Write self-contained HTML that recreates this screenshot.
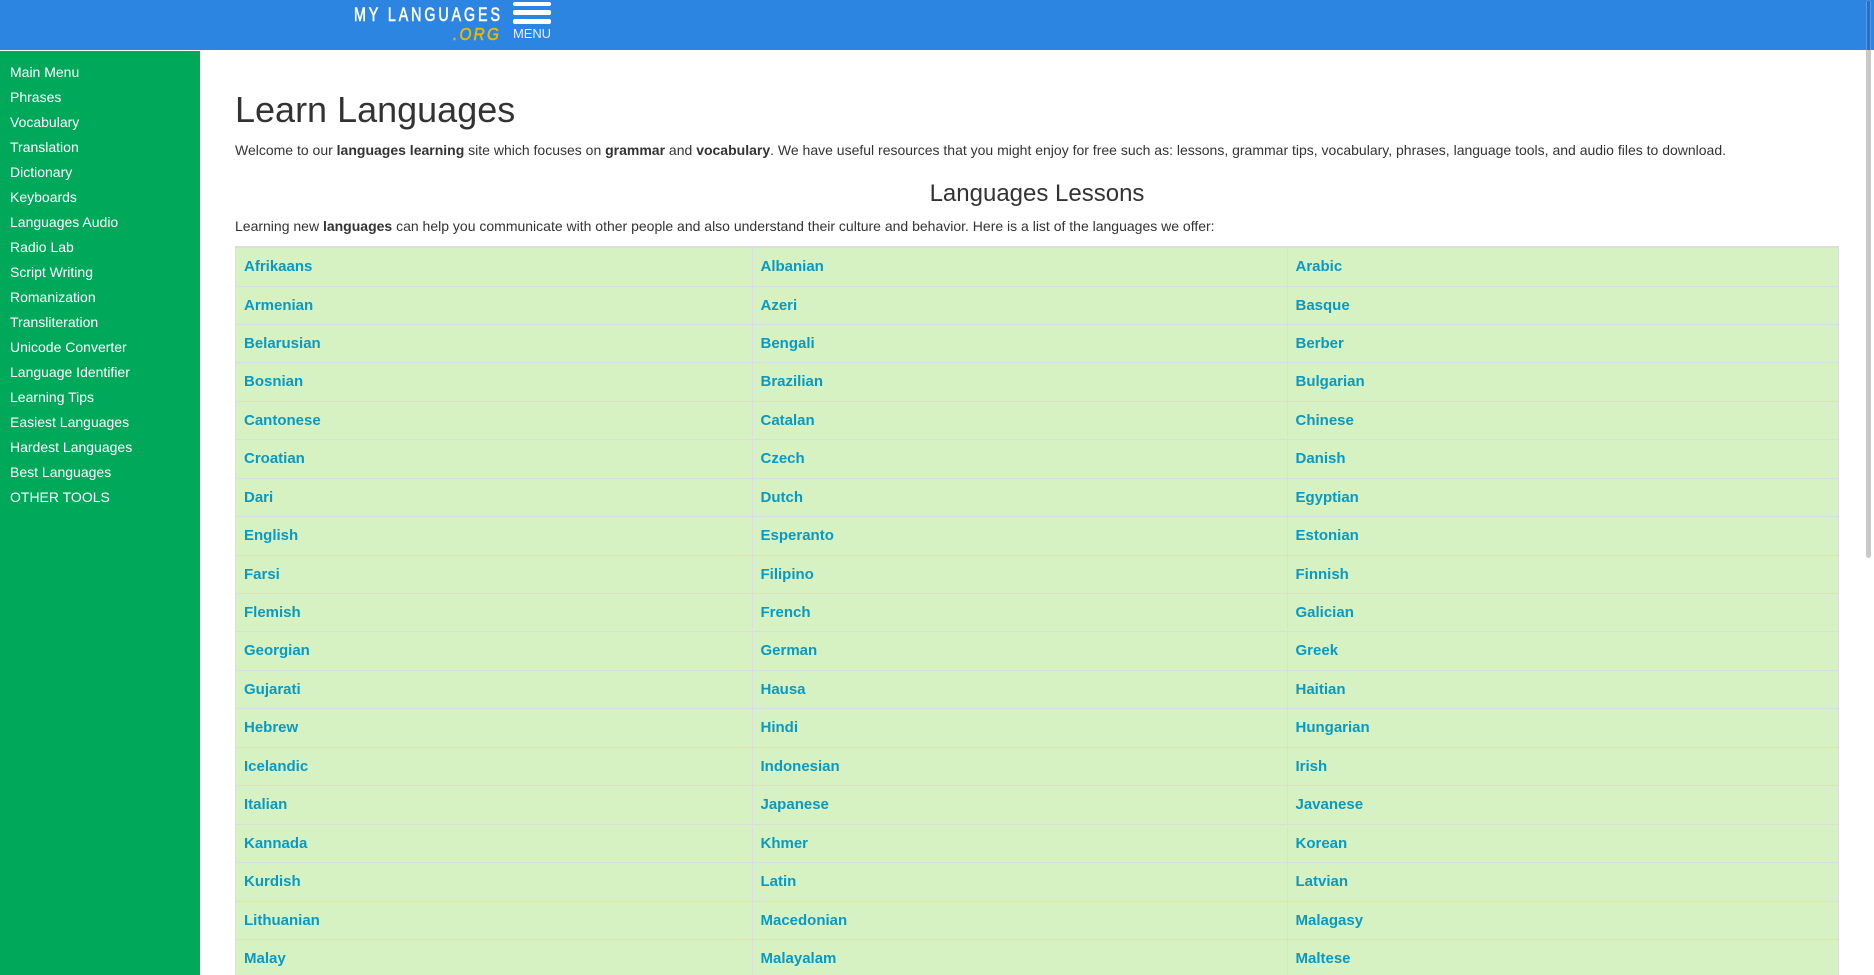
<!DOCTYPE html>
<html lang="en">
<head>
<meta charset="utf-8">
<title>Learn Languages</title>
<style>
html,body{margin:0;padding:0;width:1874px;height:975px;overflow:hidden;background:#fff}
body{font-family:"Liberation Sans",Arial,sans-serif;font-size:14px;line-height:20px;color:#333;position:relative}
a{text-decoration:none}
#hdr{position:absolute;left:0;top:0;width:1874px;height:50px;background:#2d85e2}
#hdr svg{position:absolute;left:0;top:0}
#side{position:absolute;left:0;top:51px;width:200px;height:924px;background:#00a859}
#side a{position:absolute;left:10px;color:#fff;font-size:14px;line-height:20px;white-space:nowrap}
h1{position:absolute;left:235px;top:89px;margin:0;font-size:36px;line-height:42px;font-weight:400;color:#333;white-space:nowrap}
h2{position:absolute;left:235px;width:1604px;top:180px;margin:0;font-size:24px;line-height:27px;font-weight:400;text-align:center;color:#333}
p{position:absolute;left:235px;margin:0;white-space:nowrap}
table{position:absolute;left:235px;top:246px;width:1603px;table-layout:fixed;border-collapse:collapse;background:#d7f2c2;font-size:15px;line-height:21.43px;border:1px solid #ddd;border-top:2px solid #ddd}
td{border:1px solid #ddd;padding:8px;font-weight:700}
tr:first-child td{padding-top:8.1px}
td a{color:#0a99c2}
#sb{position:absolute;left:1866px;top:0;width:5px;height:558px;background:#c8c8c8;border-radius:3px}
#sbt{position:absolute;left:1866px;top:0;width:5px;height:50px;background:#2470c4;border-radius:3px 3px 0 0;box-shadow:inset 1px 0 0 #5a9be6,inset -1px 0 0 #5a9be6}
</style>
</head>
<body>
<div id="hdr">
<svg width="1874" height="50" xmlns="http://www.w3.org/2000/svg">
<text transform="translate(354 21) scale(.75 1)" font-family="'Liberation Sans',sans-serif" font-size="19" fill="#fff" stroke="#fff" stroke-width=".6" textLength="194.6" lengthAdjust="spacing">MY LANGUAGES</text>
<text transform="translate(453 40) scale(.85 1)" font-family="'Liberation Sans',sans-serif" font-size="18" font-style="italic" fill="#f4b400" stroke="#f4b400" stroke-width=".6" textLength="54" lengthAdjust="spacing">.ORG</text>
<rect x="513" y="2" width="38" height="4" rx="2" fill="#fff"/>
<rect x="513" y="10" width="38" height="5" rx="2" fill="#fff"/>
<rect x="513" y="19" width="38" height="5" rx="2" fill="#fff"/>
<text x="513" y="38" font-family="'Liberation Sans',sans-serif" font-size="13" fill="#e4efff" textLength="38">MENU</text>
</svg>
</div>
<div id="side">
<a style="top:11px">Main Menu</a>
<a style="top:36px">Phrases</a>
<a style="top:61px">Vocabulary</a>
<a style="top:86px">Translation</a>
<a style="top:111px">Dictionary</a>
<a style="top:136px">Keyboards</a>
<a style="top:161px">Languages Audio</a>
<a style="top:186px">Radio Lab</a>
<a style="top:211px">Script Writing</a>
<a style="top:236px">Romanization</a>
<a style="top:261px">Transliteration</a>
<a style="top:286px">Unicode Converter</a>
<a style="top:311px">Language Identifier</a>
<a style="top:336px">Learning Tips</a>
<a style="top:361px">Easiest Languages</a>
<a style="top:386px">Hardest Languages</a>
<a style="top:411px">Best Languages</a>
<a style="top:436px">OTHER TOOLS</a>
</div>
<h1>Learn Languages</h1>
<p style="top:140px">Welcome to our <b>languages learning</b> site which focuses on <b>grammar</b> and <b>vocabulary</b>. We have useful resources that you might enjoy for free such as: lessons, grammar tips, vocabulary, phrases, language tools, and audio files to download.</p>
<h2>Languages Lessons</h2>
<p style="top:216px">Learning new <b>languages</b> can help you communicate with other people and also understand their culture and behavior. Here is a list of the languages we offer:</p>
<table>
<colgroup><col style="width:516.5px"><col style="width:535px"><col style="width:551.5px"></colgroup>
<tr><td><a>Afrikaans</a></td><td><a>Albanian</a></td><td><a>Arabic</a></td></tr>
<tr><td><a>Armenian</a></td><td><a>Azeri</a></td><td><a>Basque</a></td></tr>
<tr><td><a>Belarusian</a></td><td><a>Bengali</a></td><td><a>Berber</a></td></tr>
<tr><td><a>Bosnian</a></td><td><a>Brazilian</a></td><td><a>Bulgarian</a></td></tr>
<tr><td><a>Cantonese</a></td><td><a>Catalan</a></td><td><a>Chinese</a></td></tr>
<tr><td><a>Croatian</a></td><td><a>Czech</a></td><td><a>Danish</a></td></tr>
<tr><td><a>Dari</a></td><td><a>Dutch</a></td><td><a>Egyptian</a></td></tr>
<tr><td><a>English</a></td><td><a>Esperanto</a></td><td><a>Estonian</a></td></tr>
<tr><td><a>Farsi</a></td><td><a>Filipino</a></td><td><a>Finnish</a></td></tr>
<tr><td><a>Flemish</a></td><td><a>French</a></td><td><a>Galician</a></td></tr>
<tr><td><a>Georgian</a></td><td><a>German</a></td><td><a>Greek</a></td></tr>
<tr><td><a>Gujarati</a></td><td><a>Hausa</a></td><td><a>Haitian</a></td></tr>
<tr><td><a>Hebrew</a></td><td><a>Hindi</a></td><td><a>Hungarian</a></td></tr>
<tr><td><a>Icelandic</a></td><td><a>Indonesian</a></td><td><a>Irish</a></td></tr>
<tr><td><a>Italian</a></td><td><a>Japanese</a></td><td><a>Javanese</a></td></tr>
<tr><td><a>Kannada</a></td><td><a>Khmer</a></td><td><a>Korean</a></td></tr>
<tr><td><a>Kurdish</a></td><td><a>Latin</a></td><td><a>Latvian</a></td></tr>
<tr><td><a>Lithuanian</a></td><td><a>Macedonian</a></td><td><a>Malagasy</a></td></tr>
<tr><td><a>Malay</a></td><td><a>Malayalam</a></td><td><a>Maltese</a></td></tr>
</table>
<div id="sb"></div>
<div id="sbt"></div>
</body>
</html>
